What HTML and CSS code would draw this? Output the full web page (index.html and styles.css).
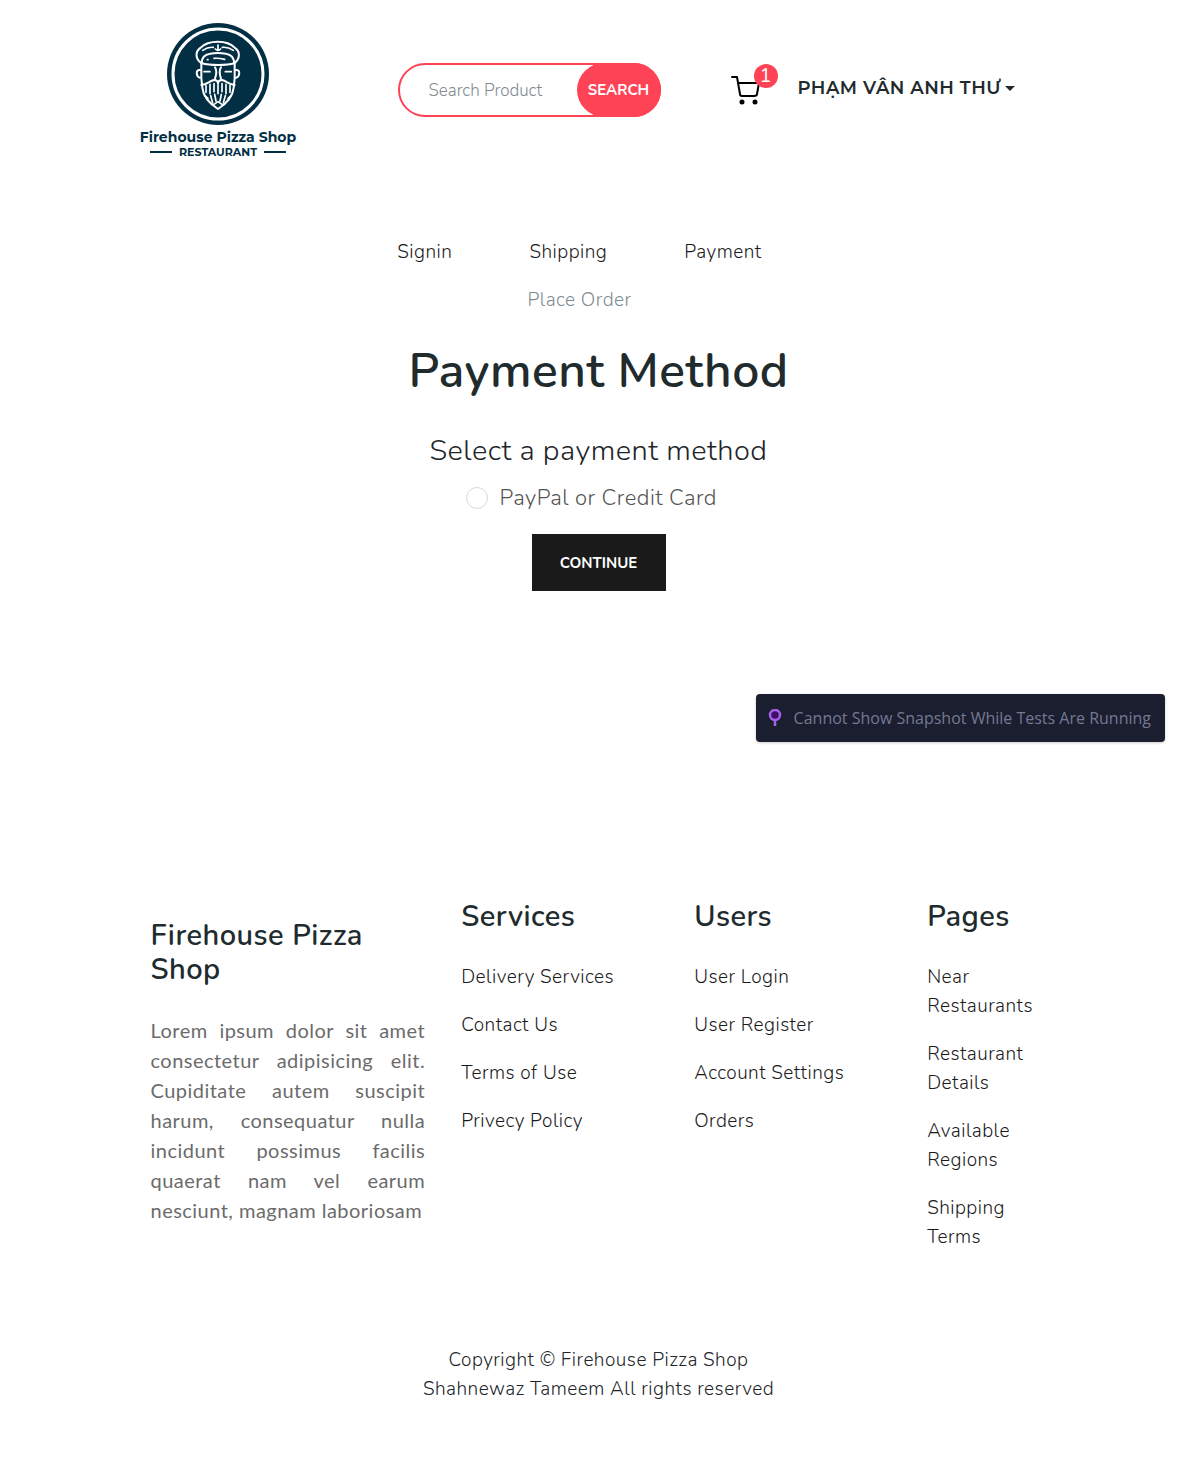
FILE: index.html
```html
<!DOCTYPE html>
<html lang="en">
<head>
<meta charset="utf-8">
<meta name="viewport" content="width=device-width, initial-scale=1">
<title>Payment Method - Firehouse Pizza Shop</title>
<link rel="stylesheet" href="styles.css">
</head>
<body>
<header class="container header">
  <a class="logo" href="#" aria-label="Firehouse Pizza Shop">
    <svg width="160" height="140" viewBox="0 0 160 140">
      <circle cx="80" cy="54" r="51" fill="#032f45"/>
      <circle cx="80" cy="54" r="45" fill="none" stroke="#fff" stroke-width="3"/>
      <g transform="translate(52 15) scale(.3333)" fill="none" stroke="#fff" stroke-width="6" stroke-linecap="round" stroke-linejoin="round">
        <path d="M35 85C15 72 15 50 32 38C55 14 112 14 134 38C152 50 150 72 133 85"/>
        <path d="M38 46C50 38 62 36 70 37M97 37C106 36 118 38 130 46M84 30V46M76 42Q84 50 92 42" stroke-width="5"/>
        <path d="M35 85C35 65 45 58 60 56C75 53 92 53 108 56C122 58 132 66 133 85C110 92 60 92 35 85Z"/>
        <path d="M52 74h2M72 70C82 69 92 70 104 73M42 110H60M106 110H124" stroke-width="5"/>
        <path d="M75 97C80 105 79 120 75 131M93 97C88 105 89 120 93 131"/>
        <path d="M30 105C16 103 18 125 30 128M138 105C152 103 150 125 138 128"/>
        <path d="M34 85V130L37 158C40 190 62 208 84 222C106 208 128 190 131 158L134 130V85"/>
        <path d="M34 150C50 150 58 138 72 135C80 135 84 140 84 146C84 140 88 135 96 135C110 138 118 150 134 150"/>
        <path d="M48 152V172M60 148V176M72 146V170M84 150V176M96 146V170M108 148V176M120 152V172M44 182L54 190M62 182L68 204M74 178L78 198M94 178L90 198M106 182L100 204M124 182L114 190M72 208L84 200L96 208" stroke-width="5"/>
      </g>
      <g fill="#032f45" text-anchor="middle">
        <text class="logo-name" x="80" y="122">Firehouse Pizza Shop</text>
        <text class="logo-sub" x="80" y="136">RESTAURANT</text>
        <path d="M12 131h22v2H12zM126 131h22v2h-22z"/>
      </g>
    </svg>
  </a>
  <form class="search" role="search">
    <input class="search-input" type="search" placeholder="Search Product" aria-label="Search Product">
    <button class="search-button" type="button">SEARCH</button>
  </form>
  <a class="cart" href="#" aria-label="Cart">
    <svg width="32" height="32" viewBox="0 0 32 32" fill="none" stroke="#000" stroke-width="2" stroke-linecap="round" stroke-linejoin="round">
      <path d="M2 4h5l3 17c0 1 1 2 2 2h12c2 0 3-1 3-2l2-11H8"/>
      <circle cx="12" cy="29" r="1.500" fill="#000"/>
      <circle cx="25" cy="29" r="1.500" fill="#000"/>
    </svg>
    <span class="badge">1</span>
  </a>
  <button class="user" type="button">PHẠM VÂN ANH THƯ</button>
</header>

<main>
  <ul class="steps">
    <li><a href="#">Signin</a></li>
    <li><a href="#">Shipping</a></li>
    <li><a href="#">Payment</a></li>
    <li class="disabled">Place Order</li>
  </ul>
  <form class="payment">
    <h1>Payment Method</h1>
    <fieldset>
      <legend>Select a payment method</legend>
      <label class="option" for="paypal"><input type="radio" id="paypal" name="method">PayPal or Credit Card</label>
    </fieldset>
    <button class="continue" type="button">CONTINUE</button>
  </form>
</main>

<div class="toast" role="status">
  <svg width="14" height="18" viewBox="0 0 14 18" fill="none" stroke="#a560e8" stroke-width="2.500">
    <circle cx="7" cy="6" r="5" fill="#3d1068"/>
    <path d="M7 11v6"/>
  </svg>
  <span>Cannot Show Snapshot While Tests Are Running</span>
</div>

<footer class="container">
  <div class="columns">
    <section class="about">
      <h2>Firehouse Pizza Shop</h2>
      <p>Lorem ipsum dolor sit amet consectetur adipisicing elit. Cupiditate autem suscipit harum, consequatur nulla incidunt possimus facilis quaerat nam vel earum nesciunt, magnam laboriosam</p>
    </section>
    <section>
      <h2>Services</h2>
      <ul>
        <li><a href="#">Delivery Services</a></li>
        <li><a href="#">Contact Us</a></li>
        <li><a href="#">Terms of Use</a></li>
        <li><a href="#">Privecy Policy</a></li>
      </ul>
    </section>
    <section>
      <h2>Users</h2>
      <ul>
        <li><a href="#">User Login</a></li>
        <li><a href="#">User Register</a></li>
        <li><a href="#">Account Settings</a></li>
        <li><a href="#">Orders</a></li>
      </ul>
    </section>
    <section>
      <h2>Pages</h2>
      <ul>
        <li><a href="#">Near Restaurants</a></li>
        <li><a href="#">Restaurant Details</a></li>
        <li><a href="#">Available Regions</a></li>
        <li><a href="#">Shipping Terms</a></li>
      </ul>
    </section>
  </div>
  <p class="copyright">Copyright © Firehouse Pizza Shop<br>Shahnewaz Tameem All rights reserved</p>
</footer>
</body>
</html>
```

FILE: styles.css
```css
* {
  box-sizing: border-box;
}

body {
  position: relative;
  margin: 0;
  background: #fff;
  color: #212529;
  font: 300 19px/29px Nunito, "Nunito Sans", Lato, sans-serif;
  letter-spacing: 0.025em;
}

h1, h2, p, ul, fieldset, legend {
  margin: 0;
  padding: 0;
}

h1, h2 {
  color: #212b2e;
  font-weight: 600;
}

ul {
  list-style: none;
}

a {
  color: #1a1a1a;
  text-decoration: none;
}

button, input {
  font-family: inherit;
}

.container {
  max-width: 932px;
  margin: 0 auto;
}

/* Header */
.header {
  display: grid;
  grid-template-columns: 265px 263px 137px auto;
  align-items: center;
  height: 180px;
}

.logo {
  display: flex;
  justify-content: center;
  width: 170px;
}

.logo-name {
  font: 700 14px Montserrat, Inter, sans-serif;
  letter-spacing: 0;
}

.logo-sub {
  font: 700 11px Montserrat, Inter, sans-serif;
  letter-spacing: 0;
}

.search {
  display: flex;
  height: 54px;
  border: 2px solid #ff4357;
  border-radius: 27px;
}

.search-input {
  flex: 1;
  min-width: 0;
  padding: 0 0 0 29px;
  border: 0;
  background: none;
  font-size: 17px;
  font-weight: 300;
  appearance: none;
  outline: 0;
}

.search-input::placeholder {
  color: #808b92;
}

.search-button {
  width: 84px;
  margin: -2px;
  padding: 0;
  border: 0;
  border-radius: 27px;
  background: #ff4357;
  color: #fff;
  font-size: 15px;
  font-weight: 700;
}

.cart {
  position: relative;
  display: flex;
  width: 32px;
  margin: 0 0 2px 69px;
}

.badge {
  position: absolute;
  top: -9px;
  right: -16px;
  width: 24px;
  height: 24px;
  border-radius: 50%;
  background: #ff4357;
  color: #fff;
  font-size: 20px;
  font-weight: 400;
  line-height: 24px;
  letter-spacing: 0;
  text-align: center;
}

.user {
  display: flex;
  align-items: center;
  gap: 4px;
  margin: 0 0 4px;
  padding: 0;
  border: 0;
  background: none;
  color: #212b2e;
  font: 600 18px/29px Montserrat, Inter, sans-serif;
  letter-spacing: inherit;
  white-space: nowrap;
}

.user::after {
  content: "";
  border: 5px solid transparent;
  border-top-color: currentColor;
  border-bottom: 0;
}

/* Checkout */
.steps {
  display: flex;
  flex-wrap: wrap;
  justify-content: center;
  gap: 19px 77px;
  max-width: 480px;
  margin: 58px auto 0;
  padding-right: 38px;
}

.disabled {
  color: #808b92;
}

.payment {
  display: flex;
  flex-direction: column;
  align-items: center;
}

h1 {
  margin: 27px 0 34px;
  font-size: 48px;
  line-height: 58px;
}

fieldset {
  border: 0;
  text-align: center;
}

legend {
  font-size: 29px;
  line-height: 34px;
}

.option {
  display: flex;
  align-items: center;
  gap: 12px;
  margin: 13px 0 19px;
  padding-left: 36px;
  color: #555;
  font-size: 22px;
  line-height: 34px;
}

.option input {
  appearance: none;
  width: 22px;
  height: 22px;
  margin: 0;
  border: 1px solid #d9d9d9;
  border-radius: 50%;
}

.continue {
  width: 134px;
  height: 57px;
  border: 0;
  background: #1a1a1a;
  color: #fff;
  font-size: 15px;
  font-weight: 700;
}

.toast {
  position: absolute;
  top: 694px;
  right: 32px;
  display: flex;
  align-items: center;
  gap: 12px;
  height: 48px;
  padding: 0 14px 0 12px;
  border-radius: 4px;
  background: #1b1e2e;
  box-shadow: 0 1px 3px rgba(0, 0, 0, 0.2);
  color: #747994;
  font: 400 16px/24px "Open Sans", sans-serif;
  letter-spacing: 0;
}

/* Footer */
.columns {
  display: grid;
  grid-template-columns: 4fr 3fr 3fr 2fr;
  margin-top: 309px;
}

.columns section {
  padding: 0 18px;
}

.columns .about {
  padding-top: 19px;
}

h2 {
  font-size: 29px;
  line-height: 34px;
}

.columns ul {
  display: grid;
  gap: 19px;
  margin-top: 29px;
}

.about p {
  margin-top: 28px;
  color: #6b6b6b;
  font: 400 20px/30px Lato, sans-serif;
  text-align: justify;
}

.copyright {
  margin: 94px 0 58px;
  text-align: center;
}
```
